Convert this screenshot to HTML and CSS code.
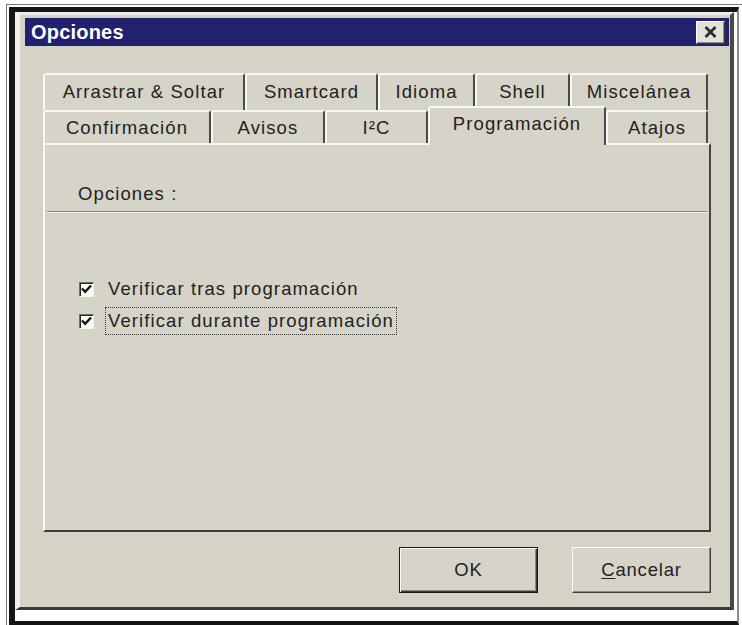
FILE: index.html
```html
<!DOCTYPE html>
<html lang="es">
<head>
<meta charset="utf-8">
<title>Opciones</title>
<link rel="stylesheet" href="styles.css">
</head>
<body>
<div class="frame">
  <div class="frame-inner">
    <div class="dialog">
      <div class="titlebar">
        <span class="title">Opciones</span>
        <span class="close" aria-label="Cerrar">
          <svg width="13" height="12" viewBox="0 0 13 12"><path d="M1.5 1 L11.5 11 M11.5 1 L1.5 11" stroke="#2a2a2a" stroke-width="2.6" fill="none"/></svg>
        </span>
      </div>
      <div class="content">
        <div class="tabrow back">
          <div class="tab t-arrastrar">Arrastrar &amp; Soltar</div>
          <div class="tab t-smartcard">Smartcard</div>
          <div class="tab t-idioma">Idioma</div>
          <div class="tab t-shell">Shell</div>
          <div class="tab t-misc">Miscelánea</div>
        </div>
        <div class="tabrow front">
          <div class="tab t-confirm">Confirmación</div>
          <div class="tab t-avisos">Avisos</div>
          <div class="tab t-i2c">I²C</div>
          <div class="tab t-prog active">Programación</div>
          <div class="tab t-atajos">Atajos</div>
        </div>
        <div class="panel">
          <div class="panel-head">Opciones :</div>
          <div class="checks">
            <label class="check">
              <span class="box"><svg width="11" height="10" viewBox="0 0 11 10"><path d="M1 4.5 L4.2 7.8 L10 1.5" stroke="#111" stroke-width="2.4" fill="none"/></svg></span>
              <span class="label">Verificar tras programación</span>
            </label>
            <label class="check">
              <span class="box"><svg width="11" height="10" viewBox="0 0 11 10"><path d="M1 4.5 L4.2 7.8 L10 1.5" stroke="#111" stroke-width="2.4" fill="none"/></svg></span>
              <span class="label focus">Verificar durante programación</span>
            </label>
          </div>
        </div>
        <div class="buttons">
          <button class="btn default">OK</button>
          <button class="btn"><u>C</u>ancelar</button>
        </div>
      </div>
    </div>
  </div>
</div>
</body>
</html>
```

FILE: styles.css
```css
* {
  box-sizing: border-box;
}

html,
body {
  margin: 0;
}

body {
  width: 742px;
  height: 625px;
  overflow: hidden;
  background: #fff;
  font-family: "Liberation Sans", Arial, sans-serif;
  color: #222;
}

/* black picture frame around the window */
.frame {
  margin: 4px 0 0 6px;
  height: 621px;
  border-top: 1px solid #7a7a7a;
  border-left: 1px solid #7a7a7a;
  padding: 2px 0 0 2px;
}

.frame-inner {
  height: 618px;
  margin-right: 3px;
  border-style: solid;
  border-width: 5px 2px 4px 6px;
  border-color: #151515 #8c8c8c #151515 #151515;
  padding: 0 3px 11px 0;
  background: #fff;
}

/* window */
.dialog {
  height: 598px;
  display: flex;
  flex-direction: column;
  background: #d5d2c6;
  border-style: solid;
  border-width: 3px 4px 3px 5px;
  border-color: #ececE4 #4a4a45 #3a3a36 #f2f2ec;
  padding: 3px 1px 0 5px;
}

.titlebar {
  height: 28px;
  flex: none;
  display: flex;
  align-items: center;
  justify-content: space-between;
  padding: 0 4px 0 6px;
  background: #21216f;
}

.title {
  color: #fff;
  font-weight: bold;
  font-size: 20px;
  letter-spacing: 0.2px;
}

.close {
  width: 29px;
  height: 23px;
  display: flex;
  align-items: center;
  justify-content: center;
  background: #e2e1da;
  border: 1px solid;
  border-color: #fff #3a3a3a #3a3a3a #fff;
  box-shadow: inset -1px -1px 0 #8a8a86;
}

.content {
  flex: 1;
  display: flex;
  flex-direction: column;
  padding: 27px 18px 0 18px;
}

/* tab strip, two rows */
.tabrow {
  display: flex;
  flex: none;
}

.tabrow.back {
  height: 37px;
}

.tabrow.front {
  height: 33px;
  align-items: flex-end;
}

.tab {
  display: flex;
  align-items: center;
  justify-content: center;
  background: #d6d3c8;
  border-top: 2px solid #f8f8f3;
  border-left: 2px solid #f8f8f3;
  border-right: 2px solid #4a4a46;
  border-radius: 3px 3px 0 0;
  font-size: 18.5px;
  letter-spacing: 1.1px;
  white-space: nowrap;
}

.back .tab {
  height: 37px;
  padding-bottom: 2px;
}

.front .tab {
  height: 33px;
}

.front .tab.active {
  position: relative;
  z-index: 1;
  height: 39px;
  margin-bottom: -2px;
  padding-bottom: 6px;
}

.t-arrastrar { width: 202px; }
.t-smartcard { width: 133px; }
.t-idioma { width: 97px; }
.t-shell { width: 95px; }
.t-misc { width: 138px; }

.t-confirm { width: 168px; }
.t-avisos { width: 114px; }
.t-i2c { width: 103px; }
.t-prog { width: 178px; }
.t-atajos { width: 102px; }

/* tab page */
.panel {
  height: 389px;
  flex: none;
  background: #d6d3c8;
  border-style: solid;
  border-width: 2px;
  border-color: #f8f8f3 #45453f #3c3c38 #f8f8f3;
}

.panel-head {
  height: 67px;
  margin: 0 2px;
  display: flex;
  align-items: flex-end;
  padding: 0 0 6px 31px;
  font-size: 18.5px;
  letter-spacing: 1.1px;
  border-bottom: 1px solid #86847c;
  box-shadow: 0 1px 0 #f4f4ee;
}

.checks {
  padding-top: 61px;
  display: flex;
  flex-direction: column;
}

.check {
  height: 32px;
  display: flex;
  align-items: center;
  gap: 14px;
  padding-left: 34px;
  font-size: 18.5px;
  letter-spacing: 1.1px;
}

.box {
  width: 15px;
  height: 15px;
  display: flex;
  align-items: center;
  justify-content: center;
  background: #fbfbf8;
  border: 1px solid;
  border-color: #6e6e6a #f4f4ee #f4f4ee #6e6e6a;
  box-shadow: inset 1px 1px 0 #262626;
}

.label.focus {
  outline: 1px dotted #3a3a3a;
  outline-offset: 2px;
}

/* dialog buttons */
.buttons {
  display: flex;
  justify-content: flex-end;
  gap: 34px;
  margin-top: 15px;
}

.btn {
  width: 139px;
  height: 46px;
  padding: 0;
  font-family: "Liberation Sans", Arial, sans-serif;
  font-size: 18.5px;
  letter-spacing: 0.8px;
  color: #222;
  background: #d6d3c8;
  border: 1px solid;
  border-color: #fafaf6 #3a3a36 #3a3a36 #fafaf6;
  box-shadow: inset -1px -1px 0 #8a8882;
}

.btn.default {
  border-color: #1a1a1a;
  box-shadow: inset 1px 1px 0 #fafaf6, inset -1px -1px 0 #3a3a36, inset -2px -2px 0 #8a8882;
}

.btn u {
  text-decoration-thickness: 1px;
  text-underline-offset: 2px;
}
```
